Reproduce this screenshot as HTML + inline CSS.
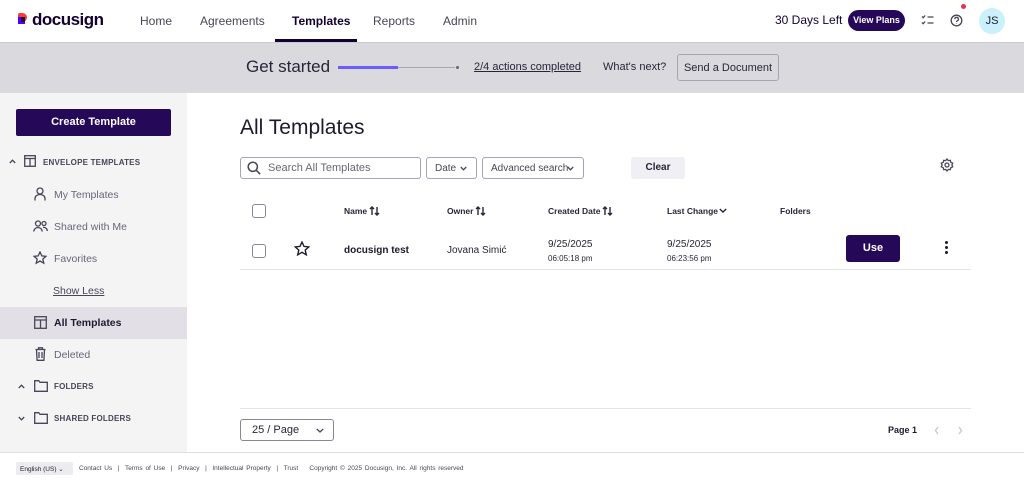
<!DOCTYPE html>
<html><head><meta charset="utf-8"><style>
*{box-sizing:border-box;margin:0;padding:0}
body{width:1024px;height:481px;overflow:hidden;font-family:"Liberation Sans",sans-serif;color:#1e1a2e;background:#fff;position:relative;font-size:12px}
.a{position:absolute}
.nav{font-size:12px;color:#4a4457}
.side{color:#6b6478;font-size:10.5px}
.cap{font-size:8px;font-weight:bold;color:#4a4457;letter-spacing:.2px}
svg{position:absolute;fill:none;stroke:#4a4457;stroke-width:1.3}
.th{font-size:8.5px;font-weight:bold;color:#2a2438}
.cb{width:14px;height:14px;border:1.3px solid #8a8496;border-radius:3px}
</style></head><body>
<!-- header -->
<div class="a" style="left:18px;top:13px;width:9px;height:9px;background:#ff3a3a;border-radius:2px 5px 5px 2px"></div>
<div class="a" style="left:18px;top:17px;width:7px;height:7px;background:#4c00ff"></div>
<div class="a" style="left:21px;top:17px;width:4px;height:5px;background:#1e1a2e"></div>
<div class="a" style="left:32px;top:10px;font-size:17px;font-weight:bold;letter-spacing:-.5px;color:#130032">docusign</div>
<div class="a nav" style="left:140px;top:14px">Home</div>
<div class="a nav" style="left:200px;top:14px">Agreements</div>
<div class="a nav" style="left:292px;top:14px;color:#130032;font-weight:bold">Templates</div>
<div class="a" style="left:275px;top:39px;width:82px;height:3px;background:#130032"></div>
<div class="a nav" style="left:373px;top:14px">Reports</div>
<div class="a nav" style="left:443px;top:14px">Admin</div>
<div class="a" style="left:775px;top:13px;font-size:12px;color:#130032">30 Days Left</div>
<div class="a" style="left:848px;top:10px;width:57px;height:21px;border-radius:11px;background:#260859;color:#fff;font-size:9px;font-weight:bold;text-align:center;line-height:21px">View Plans</div>
<svg style="left:921px;top:14px" width="13" height="12"><path d="M1 2.5l1.2 1.2 2-2.2M1 8.5l1.2 1.2 2-2.2M6.5 3h6M6.5 9h6"/></svg>
<svg style="left:950px;top:14px" width="13" height="13"><circle cx="6.5" cy="6.5" r="5.3"/><path d="M4.8 5.2a1.8 1.8 0 1 1 2.5 1.6c-.6.3-.8.6-.8 1.2M6.5 9.5v.4"/></svg>
<div class="a" style="left:961px;top:4px;width:5px;height:5px;border-radius:50%;background:#e8344a"></div>
<div class="a" style="left:979px;top:8px;width:26px;height:26px;border-radius:50%;background:#c9f0fb;font-size:11px;text-align:center;line-height:26px;color:#1e1a2e">JS</div>
<!-- banner -->
<div class="a" style="left:0;top:42px;width:1024px;height:51px;background:#d9d9de;border-top:1px solid #c9c9cf"></div>
<div class="a" style="left:246px;top:57px;font-size:17px;color:#2a2438">Get started</div>
<div class="a" style="left:338px;top:66px;width:60px;height:3px;background:#6b5cff"></div>
<div class="a" style="left:398px;top:67px;width:57px;height:1px;background:#a9a6b3"></div>
<div class="a" style="left:456px;top:66px;width:3px;height:3px;border-radius:50%;background:#6a6475"></div>
<div class="a" style="left:474px;top:61px;font-size:11px;text-decoration:underline;color:#2a2438">2/4 actions completed</div>
<div class="a" style="left:603px;top:61px;font-size:11px;color:#2a2438">What's next?</div>
<div class="a" style="left:677px;top:54px;width:102px;height:27px;border:1px solid #a9a3b4;border-radius:3px;font-size:11px;padding-top:7px;text-align:center;color:#2a2438">Send a Document</div>
<!-- sidebar -->
<div class="a" style="left:0;top:93px;width:187px;height:359px;background:#f4f4f4"></div>
<div class="a" style="left:16px;top:109px;width:155px;height:27px;background:#260859;border-radius:2px;color:#fff;font-size:11px;font-weight:bold;text-align:center;padding-top:7px">Create Template</div>
<svg style="left:9px;top:159px" width="7" height="5"><path d="M.8 4L3.5 1.2 6.2 4"/></svg>
<svg style="left:24px;top:155px" width="12" height="12"><rect x=".7" y=".7" width="10.6" height="10.6"/><path d="M.7 3.5h10.6M6 3.5v8"/></svg>
<div class="a cap" style="left:43px;top:158px">ENVELOPE TEMPLATES</div>
<svg style="left:34px;top:187px" width="12" height="14"><circle cx="6" cy="4" r="3"/><path d="M1 13.5v-2a5 4 0 0 1 10 0v2"/></svg>
<div class="a side" style="left:54px;top:189px">My Templates</div>
<svg style="left:33px;top:220px" width="15" height="12"><circle cx="5" cy="3.5" r="2.5"/><circle cx="11" cy="3.5" r="2"/><path d="M.8 11.5a4.2 4 0 0 1 8.4 0M10 7.5a3.5 3.5 0 0 1 4.3 3.5"/></svg>
<div class="a side" style="left:54px;top:221px">Shared with Me</div>
<svg style="left:33px;top:251px" width="14" height="14"><path d="M7 1l1.8 3.9 4.2.4-3.2 2.8 1 4.1L7 10 3.2 12.2l1-4.1L1 5.3l4.2-.4z"/></svg>
<div class="a side" style="left:54px;top:253px">Favorites</div>
<div class="a side" style="left:53px;top:285px;text-decoration:underline;color:#4a4457">Show Less</div>
<div class="a" style="left:0;top:307px;width:187px;height:32px;background:#e2e0e6"></div>
<svg style="left:34px;top:316px" width="13" height="13"><rect x=".7" y=".7" width="11.6" height="11.6"/><path d="M.7 4h11.6M6.5 4v8.3"/></svg>
<div class="a side" style="left:54px;top:317px;color:#1e1a2e;font-weight:bold">All Templates</div>
<svg style="left:35px;top:347px" width="11" height="14"><path d="M.5 2.5h10M3.5 2.5V.8h4v1.7M1.5 2.5l.6 10.8h6.8l.6-10.8M4 5v6M7 5v6"/></svg>
<div class="a side" style="left:54px;top:349px">Deleted</div>
<svg style="left:18px;top:384px" width="7" height="5"><path d="M.8 4L3.5 1.2 6.2 4"/></svg>
<svg style="left:34px;top:380px" width="14" height="12"><path d="M.7 11.3V.7h4l1.3 1.6h7.3v9z"/></svg>
<div class="a cap" style="left:54px;top:382px">FOLDERS</div>
<svg style="left:18px;top:416px" width="7" height="5"><path d="M.8 1L3.5 3.8 6.2 1"/></svg>
<svg style="left:34px;top:412px" width="14" height="12"><path d="M.7 11.3V.7h4l1.3 1.6h7.3v9z"/></svg>
<div class="a cap" style="left:54px;top:414px">SHARED FOLDERS</div>
<!-- main -->
<div class="a" style="left:240px;top:116px;font-size:21px;color:#1e1a2e">All Templates</div>
<div class="a" style="left:240px;top:157px;width:181px;height:22px;border:1px solid #a9a3b4;border-radius:3px"></div>
<svg style="left:247px;top:161px;stroke-width:1.5" width="14" height="14"><circle cx="5.8" cy="5.8" r="4.6"/><path d="M9.2 9.2l4 4"/></svg>
<div class="a" style="left:268px;top:162px;font-size:11px;color:#6b6478">Search All Templates</div>
<div class="a" style="left:426px;top:157px;width:51px;height:22px;border:1px solid #a9a3b4;border-radius:3px;font-size:10px;color:#4a4457;padding:5px 0 0 8px">Date</div>
<svg style="left:460px;top:166px" width="7" height="5"><path d="M.8 1L3.5 3.8 6.2 1"/></svg>
<div class="a" style="left:482px;top:157px;width:102px;height:22px;border:1px solid #a9a3b4;border-radius:3px;font-size:10px;color:#4a4457;padding:5px 0 0 8px">Advanced search</div>
<svg style="left:567px;top:166px" width="7" height="5"><path d="M.8 1L3.5 3.8 6.2 1"/></svg>
<div class="a" style="left:631px;top:157px;width:54px;height:22px;background:#f0eff3;border-radius:3px;font-size:10px;font-weight:bold;text-align:center;padding-top:5px;color:#2a2438">Clear</div>
<svg style="left:940px;top:158px" width="14" height="14"><circle cx="7" cy="7" r="2"/><path d="M7 1l1.3 1.6 2-.3.5 2 1.9.9-.8 1.8.8 1.8-1.9.9-.5 2-2-.3L7 13l-1.3-1.6-2 .3-.5-2-1.9-.9.8-1.8-.8-1.8 1.9-.9.5-2 2 .3z"/></svg>
<div class="a cb" style="left:252px;top:204px"></div>
<div class="a th" style="left:344px;top:206px">Name</div>
<svg style="left:369px;top:206px;stroke-width:1.4;stroke:#2a2438" width="12" height="10"><path d="M3 9V1M1 3l2-2 2 2M8 1v8M6 7l2 2 2-2"/></svg>
<div class="a th" style="left:447px;top:206px">Owner</div>
<svg style="left:475px;top:206px;stroke-width:1.4;stroke:#2a2438" width="12" height="10"><path d="M3 9V1M1 3l2-2 2 2M8 1v8M6 7l2 2 2-2"/></svg>
<div class="a th" style="left:548px;top:206px">Created Date</div>
<svg style="left:602px;top:206px;stroke-width:1.4;stroke:#2a2438" width="12" height="10"><path d="M3 9V1M1 3l2-2 2 2M8 1v8M6 7l2 2 2-2"/></svg>
<div class="a th" style="left:667px;top:206px">Last Change</div>
<svg style="left:719px;top:208px;stroke-width:1.4;stroke:#2a2438" width="8" height="5"><path d="M.8 1L4 4 7.2 1"/></svg>
<div class="a th" style="left:780px;top:206px">Folders</div>
<div class="a cb" style="left:252px;top:244px"></div>
<svg style="left:294px;top:241px;stroke:#1e1a2e;stroke-width:1.4" width="16" height="15"><path d="M8 1l2 4.4 4.8.5-3.6 3.2 1.1 4.7L8 11.3 3.7 13.8l1.1-4.7L1.2 5.9 6 5.4z"/></svg>
<div class="a" style="left:344px;top:245px;font-size:10px;font-weight:bold">docusign test</div>
<div class="a" style="left:447px;top:245px;font-size:10px;color:#2a2438">Jovana Simić</div>
<div class="a" style="left:548px;top:239px;font-size:10px;color:#2a2438">9/25/2025</div>
<div class="a" style="left:548px;top:254px;font-size:8px;color:#2a2438">06:05:18 pm</div>
<div class="a" style="left:667px;top:239px;font-size:10px;color:#2a2438">9/25/2025</div>
<div class="a" style="left:667px;top:254px;font-size:8px;color:#2a2438">06:23:56 pm</div>
<div class="a" style="left:846px;top:235px;width:54px;height:27px;background:#260859;border-radius:3px;color:#fff;font-size:11px;font-weight:bold;text-align:center;padding-top:7px">Use</div>
<div class="a" style="left:945px;top:241px;width:3px;height:3px;border-radius:50%;background:#1e1a2e;box-shadow:0 5px 0 #1e1a2e,0 10px 0 #1e1a2e"></div>
<div class="a" style="left:240px;top:269px;width:731px;height:1px;background:#e4e3e8"></div>
<div class="a" style="left:240px;top:408px;width:731px;height:1px;background:#e4e3e8"></div>
<div class="a" style="left:240px;top:419px;width:94px;height:22px;border:1px solid #8a8496;border-radius:3px;font-size:11px;padding:4px 0 0 11px;color:#2a2438">25 / Page</div>
<svg style="left:316px;top:428px" width="8" height="5"><path d="M.8 1L4 4 7.2 1"/></svg>
<div class="a" style="left:888px;top:425px;font-size:9px;font-weight:bold">Page 1</div>
<svg style="left:934px;top:426px;stroke:#c9c6cf" width="30" height="9"><path d="M4 1L1.5 4.5 4 8M25 1l2.5 3.5L25 8"/></svg>
<!-- footer -->
<div class="a" style="left:0;top:452px;width:1024px;height:1px;background:#e0dfe4"></div>
<div class="a" style="left:16px;top:462px;width:57px;height:13px;background:#ececee;border-radius:2px;font-size:6.5px;padding:3px 0 0 4px">English (US) ⌄</div>
<div class="a" style="left:79px;top:465px;font-size:6.5px;color:#4a4457;word-spacing:1px">Contact Us &nbsp;|&nbsp; Terms of Use &nbsp;|&nbsp; Privacy &nbsp;|&nbsp; Intellectual Property &nbsp;|&nbsp; Trust &nbsp;&nbsp; Copyright © 2025 Docusign, Inc. All rights reserved</div>
</body></html>
